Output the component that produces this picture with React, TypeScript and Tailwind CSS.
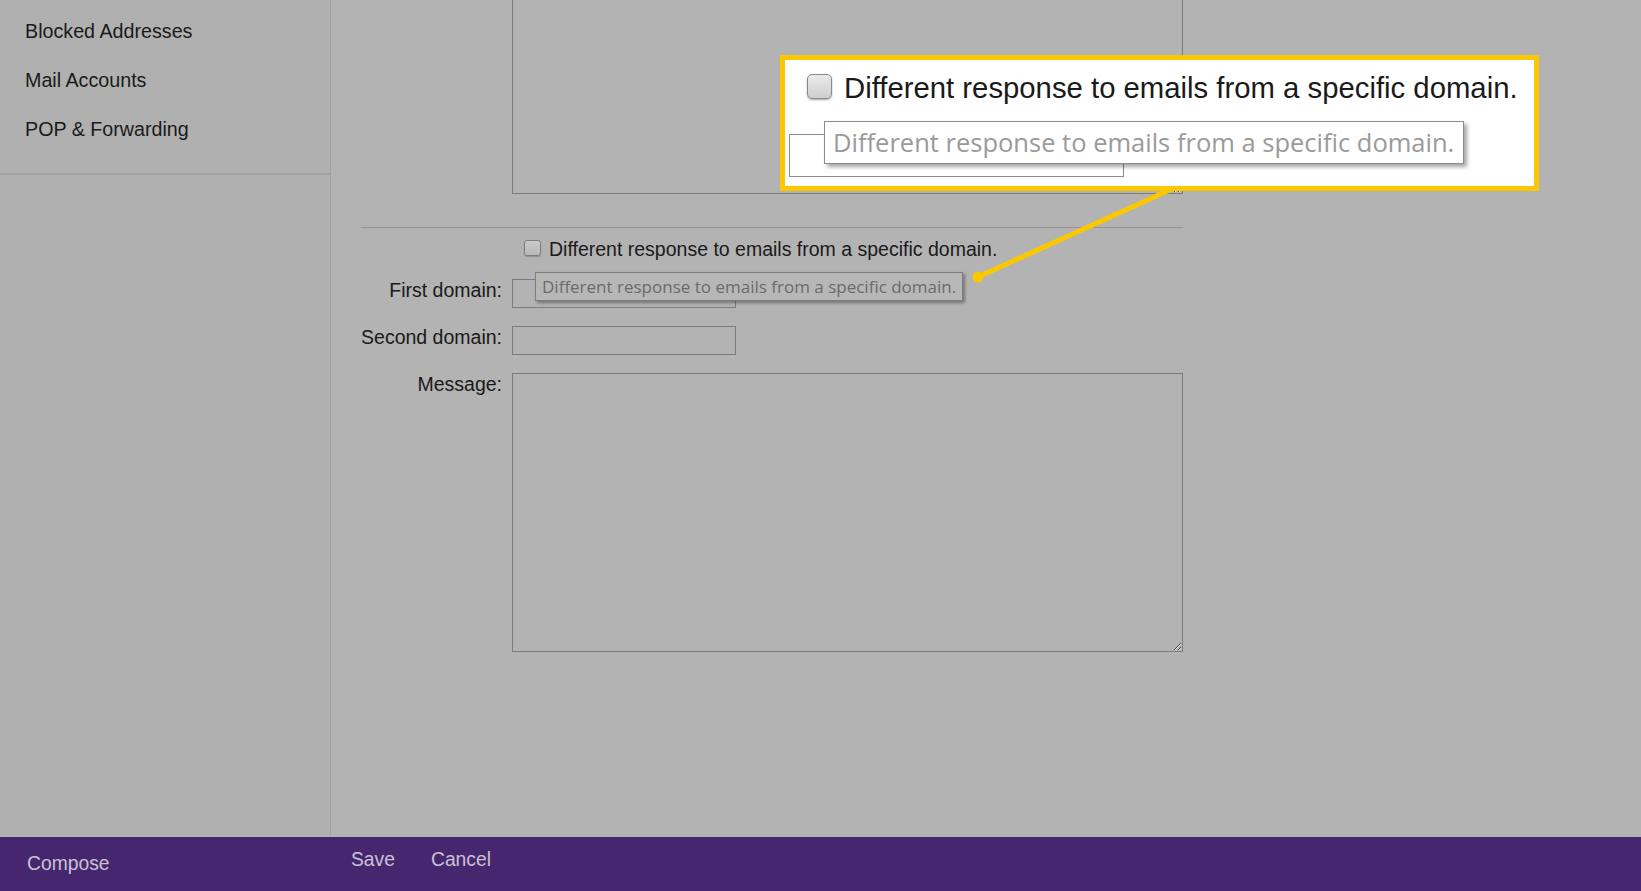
import React from "react";

const sans = { fontFamily: '"Liberation Sans", Arial, sans-serif' };
const tip = { fontFamily: '"Open Sans", "Noto Sans", sans-serif' };

export default function App() {
  return (
    <div
      className="relative flex h-[891px] w-full flex-col overflow-hidden bg-[#b3b3b3] text-[#1a1a1a]"
      style={sans}
    >
      <div className="flex min-h-0 flex-1">
        {/* Sidebar */}
        <aside className="flex w-[331px] shrink-0 flex-col border-r border-[#a3a3a3] bg-[#b0b0b0]">
          <nav className="flex h-[175px] flex-col border-b-2 border-[#a2a2a2] pt-[19px] pl-[25px] text-[19.7px] leading-[24px]">
            <div className="h-[49px]">Blocked Addresses</div>
            <div className="h-[49px]">Mail Accounts</div>
            <div className="h-[49px]">POP &amp; Forwarding</div>
          </nav>
        </aside>

        {/* Content */}
        <main className="flex-1 pl-[30px]">
          <div className="flex w-[822px] flex-col text-[19.5px] leading-[22px]">
            <div className="grid grid-cols-[141px_671px] gap-x-[10px]">
              <div />
              <textarea className="-mt-[2px] h-[196px] w-[671px] resize border border-[#7c7c7c] bg-transparent outline-none" />
            </div>

            <div className="mt-[33px] h-px w-[822px] bg-[#959595]" />

            <div className="mt-[12px] grid grid-cols-[141px_671px] gap-x-[10px]">
              <div />
              <label className="flex h-[18px] items-center gap-[8px] pl-[12px]">
                <span className="-mt-[3px] h-[16px] w-[17px] rounded-[3px] border border-[#7d7d7d] bg-gradient-to-b from-[#c9c9c9] to-[#b9b9b9] shadow-[0_1px_1px_rgba(0,0,0,0.2)]" />
                <span>Different response to emails from a specific domain.</span>
              </label>
            </div>

            <div className="mt-[21px] grid grid-cols-[141px_671px] gap-x-[10px]">
              <div className="text-right">First domain:</div>
              <input className="h-[29px] w-[224px] border border-[#7c7c7c] bg-transparent outline-none" />
            </div>

            <div className="mt-[18px] grid grid-cols-[141px_671px] gap-x-[10px]">
              <div className="text-right">Second domain:</div>
              <input className="h-[29px] w-[224px] border border-[#7c7c7c] bg-transparent outline-none" />
            </div>

            <div className="mt-[18px] grid grid-cols-[141px_671px] gap-x-[10px]">
              <div className="text-right">Message:</div>
              <textarea className="h-[279px] w-[671px] resize border border-[#7c7c7c] bg-transparent outline-none" />
            </div>
          </div>
        </main>
      </div>

      {/* Bottom bar */}
      <footer className="flex h-[54px] shrink-0 items-center bg-[#46276f] text-[19.3px] text-[#c9c2d4]">
        <div className="w-[351px] pl-[27px] pt-[1px]">Compose</div>
        <div className="mb-[7px] flex items-center gap-[36px]">
          <span>Save</span>
          <span>Cancel</span>
        </div>
      </footer>

      {/* Tooltip */}
      <div
        className="absolute left-[535px] top-[272px] flex h-[29px] w-[428px] items-center border border-[#7e7e7e] bg-[#b7b7b7] pl-[6px] text-[17px] text-[#6b6b6b] shadow-[2px_2px_3px_rgba(0,0,0,0.35)]"
        style={tip}
      >
        Different response to emails from a specific domain.
      </div>

      {/* Connector line */}
      <svg className="pointer-events-none absolute left-0 top-0" width="1641" height="891">
        <line x1="1174" y1="188" x2="978" y2="277" stroke="#fbc800" strokeWidth="5" strokeLinecap="round" />
        <circle cx="978" cy="277" r="5.5" fill="#fbc800" />
      </svg>

      {/* Callout */}
      <div className="absolute left-[780px] top-[55px] h-[136px] w-[759px] border-[5px] border-[#fbc800] bg-white">
        <div className="relative h-full w-full">
          <div className="flex items-center gap-[12px] pl-[22px] pt-[11px]">
            <span className="-mt-[4px] h-[25px] w-[25px] rounded-[5px] border border-[#8a8a8a] bg-gradient-to-b from-[#eaeaea] to-[#cfcfcf] shadow-[0_1px_2px_rgba(0,0,0,0.35)]" />
            <span className="text-[29.3px] leading-[34px] text-[#1a1a1a]">
              Different response to emails from a specific domain.
            </span>
          </div>
          <div className="absolute left-[4px] top-[74px] h-[43px] w-[335px] border border-[#8c8c8c]" />
          <div
            className="absolute left-[39px] top-[61px] flex h-[43px] w-[640px] items-center border border-[#8c8c8c] bg-white pl-[8px] text-[25.5px] text-[#9a9a9a] shadow-[3px_3px_4px_rgba(0,0,0,0.35)]"
            style={tip}
          >
            Different response to emails from a specific domain.
          </div>
        </div>
      </div>
    </div>
  );
}
